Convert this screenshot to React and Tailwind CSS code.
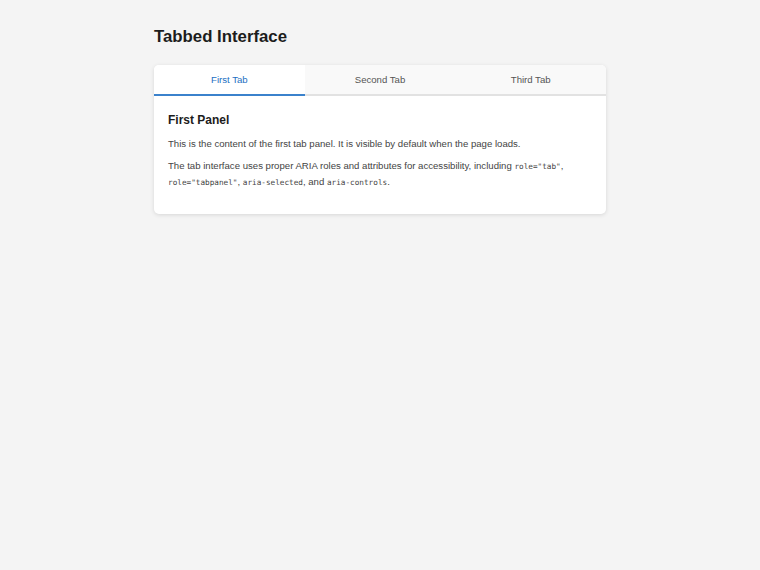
export default function App() {
  const code = "font-['DejaVu_Sans_Mono',monospace] text-[7.7px] leading-none text-[#444]";
  return (
    <div className="min-h-[570px] bg-[#f4f4f4] font-['Liberation_Sans',Arial,sans-serif] text-[#333]">
      <div className="w-[452px] mx-auto pt-[27px]">
        <h1 className="text-[16.8px] font-bold text-[#1c1c1c] leading-[20px] mb-[18px]">Tabbed Interface</h1>
        <div className="bg-white rounded-[5px] shadow-[0_1px_4px_rgba(0,0,0,0.12)] overflow-hidden">
          <div className="flex border-b-2 border-[#e2e2e2] bg-[#f9f9f9]">
            <div className="flex-1 -mb-[2px] h-[31px] pt-[1px] flex items-center justify-center text-[9.6px] text-[#1d6fc2] bg-white border-b-2 border-[#3b82cc]">First Tab</div>
            <div className="flex-1 h-[29px] pt-[1px] flex items-center justify-center text-[9.6px] text-[#555]">Second Tab</div>
            <div className="flex-1 h-[29px] pt-[1px] flex items-center justify-center text-[9.6px] text-[#555]">Third Tab</div>
          </div>
          <div className="px-[14px] pt-[16px] pb-[24px]">
            <h2 className="text-[12px] font-bold text-[#1c1c1c] leading-[16px] mb-[8px]">First Panel</h2>
            <p className="text-[9.6px] leading-[16px] text-[#444] mb-[6px]">This is the content of the first tab panel. It is visible by default when the page loads.</p>
            <p className="text-[9.6px] leading-[16px] text-[#444]">
              The tab interface uses proper ARIA roles and attributes for accessibility, including <code className={code}>role="tab"</code>, <code className={code}>role="tabpanel"</code>, <code className={code}>aria-selected</code>, and <code className={code}>aria-controls</code>.
            </p>
          </div>
        </div>
      </div>
    </div>
  );
}
